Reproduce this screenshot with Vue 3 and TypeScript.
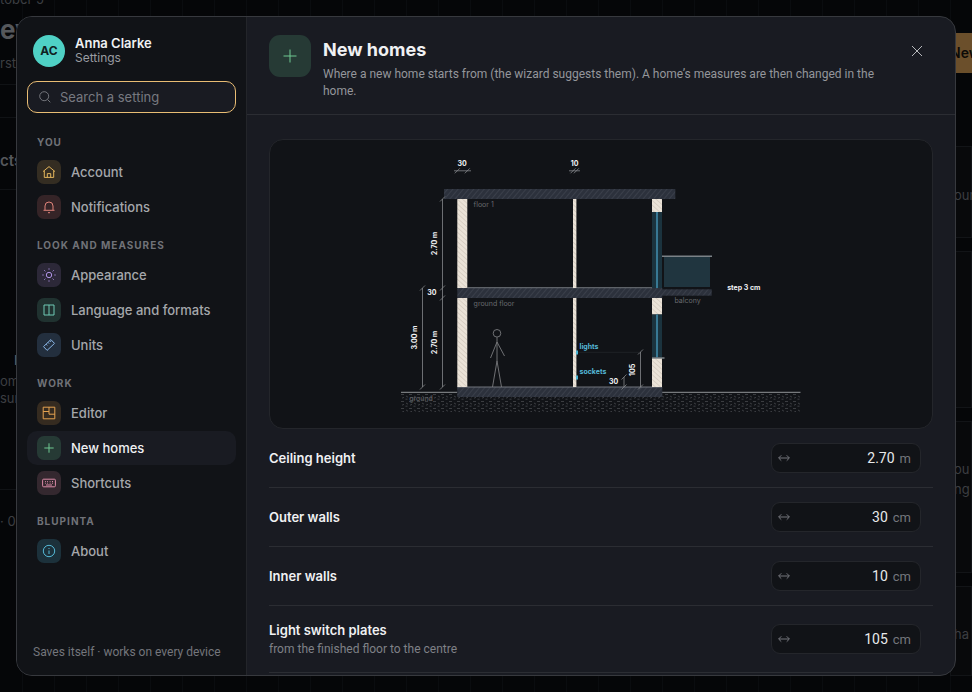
<script setup lang="ts">
import { ref } from 'vue'

interface NavItem {
  label: string
  icon: string
  tone: string
}
interface NavGroup {
  title: string
  items: NavItem[]
}
interface Measure {
  id: string
  label: string
  hint?: string
  value: string
  unit: string
}

const groups: NavGroup[] = [
  {
    title: 'You',
    items: [
      { label: 'Account', icon: 'home', tone: 'gold' },
      { label: 'Notifications', icon: 'bell', tone: 'red' },
    ],
  },
  {
    title: 'Look and measures',
    items: [
      { label: 'Appearance', icon: 'sun', tone: 'violet' },
      { label: 'Language and formats', icon: 'book', tone: 'teal' },
      { label: 'Units', icon: 'ruler', tone: 'blue' },
    ],
  },
  {
    title: 'Work',
    items: [
      { label: 'Editor', icon: 'plan', tone: 'amber' },
      { label: 'New homes', icon: 'plus', tone: 'green' },
      { label: 'Shortcuts', icon: 'keyboard', tone: 'pink' },
    ],
  },
  {
    title: 'Blupinta',
    items: [{ label: 'About', icon: 'info', tone: 'cyan' }],
  },
]

const active = ref('New homes')
const search = ref('')
const measures = ref<Measure[]>([
  { id: 'ceiling', label: 'Ceiling height', value: '2.70', unit: 'm' },
  { id: 'outer', label: 'Outer walls', value: '30', unit: 'cm' },
  { id: 'inner', label: 'Inner walls', value: '10', unit: 'cm' },
  {
    id: 'switch',
    label: 'Light switch plates',
    hint: 'from the finished floor to the centre',
    value: '105',
    unit: 'cm',
  },
])
</script>

<template>
  <div class="page">
    <div class="backdrop" aria-hidden="true">
      <div class="edge left">
        <p class="date">tober 5</p>
        <p class="greeting">ev</p>
        <p class="sub">rst</p>
        <div class="band"></div>
        <p class="tab">cts</p>
        <div class="empty">
          <p class="mark">I</p>
          <p>om</p>
          <p>sur</p>
        </div>
        <p class="count">· 0</p>
      </div>
      <div class="edge right">
        <div class="create">New</div>
        <div class="tile first"><p>our</p></div>
        <div class="tile second"></div>
        <div class="tile third"><p>ou</p><p>ng</p></div>
        <div class="tile fourth"><p>ha</p></div>
      </div>
    </div>

    <section class="dialog" role="dialog" aria-label="Settings">
      <aside class="sidebar">
        <div class="profile">
          <span class="avatar">AC</span>
          <div>
            <p class="name">Anna Clarke</p>
            <p class="role">Settings</p>
          </div>
        </div>
        <label class="search">
          <svg viewBox="0 0 12 12" width="12" height="12">
            <circle cx="5.2" cy="5.2" r="4.5" />
            <path d="M8.5 8.5 11.3 11.3" />
          </svg>
          <input v-model="search" type="text" placeholder="Search a setting" aria-label="Search a setting" />
        </label>
        <nav>
          <div v-for="group in groups" :key="group.title" class="group">
            <h2>{{ group.title }}</h2>
            <button
              v-for="item in group.items"
              :key="item.label"
              type="button"
              class="item"
              :class="{ active: item.label === active }"
              @click="active = item.label"
            >
              <span class="badge" :class="item.tone">
                <svg viewBox="0 0 14 14" width="14" height="14">
                  <path v-if="item.icon === 'home'" d="M1 6.6 7 1.6l6 5M2.3 5.8v6.6h9.4V5.8M5.3 12.4V8.6h3.4v3.8" />
                  <path v-else-if="item.icon === 'bell'" d="M3 10V6a4 4 0 0 1 8 0v4M1.5 10.3h11M6 12.7h2" />
                  <g v-else-if="item.icon === 'sun'">
                    <circle cx="7" cy="7" r="2.7" />
                    <path d="M7 .4v1.2M7 12.4v1.2M.4 7h1.2M12.4 7h1.2M2.3 2.3l1 1M10.7 10.7l1 1M11.7 2.3l-1 1M3.3 10.7l-1 1" />
                  </g>
                  <path v-else-if="item.icon === 'book'" d="M2 2h10v10H2zM7 2v10" />
                  <path v-else-if="item.icon === 'ruler'" d="M1.5 8.6 8.9 1.6l3.6 3.8L5.1 12.4zM4.1 6.2l1.1 1.2M6 4.4l1.1 1.2M7.9 2.7 9 3.9" />
                  <path v-else-if="item.icon === 'plan'" d="M1.2 1.2h11.6v11.6H1.2zM7 1.2v7M1.2 5.5H7M7 8.2h5.8" />
                  <path v-else-if="item.icon === 'plus'" d="M7 2.3v9.4M2.3 7h9.4" />
                  <g v-else-if="item.icon === 'keyboard'">
                    <rect x=".6" y="3.2" width="12.8" height="7.6" rx="1" />
                    <path d="M3 5.5h.8M5.2 5.5H6M7.7 5.5h.8M10 5.5h1M3 7.2h.8M5.2 7.2H6M7.7 7.2h.8M10 7.2h1M4 9h6" />
                  </g>
                  <g v-else>
                    <circle cx="7" cy="7" r="5.7" />
                    <path d="M7 6.5v3.5M7 4v1" />
                  </g>
                </svg>
              </span>
              {{ item.label }}
            </button>
          </div>
        </nav>
        <p class="foot">Saves itself · works on every device</p>
      </aside>

      <main class="panel">
        <header class="head">
          <span class="emblem green">
            <svg viewBox="0 0 14 14" width="14" height="14"><path d="M7 .5v13M.5 7h13" /></svg>
          </span>
          <div class="heading">
            <h1>New homes</h1>
            <p>
              Where a new home starts from (the wizard suggests them). A home’s measures are then
              changed in the home.
            </p>
          </div>
          <button type="button" class="close" aria-label="Close">
            <svg viewBox="0 0 12 12" width="12" height="12"><path d="M1 1 11 11M11 1 1 11" /></svg>
          </button>
        </header>

        <div class="body">
          <figure class="section-card">
            <svg viewBox="270 140 662 288" role="img" aria-label="Section of a two-storey home">
              <defs>
                <pattern id="slab" width="4" height="4" patternUnits="userSpaceOnUse" patternTransform="rotate(40)">
                  <rect width="4" height="4" fill="#2c313c" />
                  <path d="M0 0v4" stroke="#474c57" stroke-width="1" />
                </pattern>
                <pattern id="brick" width="3.5" height="3.5" patternUnits="userSpaceOnUse" patternTransform="rotate(-48)">
                  <rect width="3.5" height="3.5" fill="#ebe3d8" />
                  <path d="M0 0v3.5" stroke="#c9bdb1" stroke-width="1" />
                </pattern>
                <pattern id="soil" x="401" y="393" width="8" height="7" patternUnits="userSpaceOnUse">
                  <path d="M0 1.5h3M5 3l2 1.2M1 5.2l2-.9M4.5 6.2h2" stroke="#3f4246" stroke-width=".9" />
                </pattern>
              </defs>

              <rect x="401" y="393" width="399" height="19" fill="url(#soil)" />
              <path d="M401 392.3H457.3M662 392.3H800.5" class="ground" />

              <rect x="444" y="189" width="231.3" height="10" fill="url(#slab)" />
              <rect x="457.3" y="288" width="205" height="10" fill="url(#slab)" />
              <rect x="662" y="289.3" width="49.7" height="6.4" fill="url(#slab)" />
              <rect x="457.3" y="387" width="205" height="10" fill="url(#slab)" />
              <path d="M467.3 287.7H652M457.3 387H662" class="edge-line" />

              <g fill="url(#brick)">
                <rect x="457.3" y="199" width="10" height="89" />
                <rect x="457.3" y="298" width="10" height="89" />
                <rect x="573" y="199" width="3.4" height="89" />
                <rect x="573" y="298" width="3.4" height="89" />
                <rect x="652" y="199" width="10" height="13" />
                <rect x="652" y="298" width="10" height="16.5" />
                <rect x="652" y="358" width="10" height="29" />
              </g>
              <g fill="#1b333e">
                <rect x="652" y="212" width="10" height="76" />
                <rect x="652" y="314.5" width="10" height="43" />
                <rect x="664" y="257" width="46" height="30" fill="#20353f" />
              </g>
              <path d="M657 212v76M657 314.5v43" stroke="#408aaa" stroke-width="1.6" />
              <path d="M662 256.2h50M652 358h12.5" stroke="#7b8287" stroke-width="1.5" />

              <g class="dim">
                <path d="M442.5 199V387M422.5 288V387M454 170.8h17M569 170.8h11M640.5 352V387M624 377V387" />
                <path d="M440 201.5l5-5M440 290.5l5-5M440 300.5l5-5M440 389.5l5-5M420 290.5l5-5M420 389.5l5-5M454.8 173.3l5-5M464.8 173.3l5-5M570.5 173.3l5-5M573.9 173.3l5-5M638 354.5l5-5M638 389.5l5-5M621.5 379.5l5-5M621.5 389.5l5-5" />
              </g>
              <path d="M577 352.3h63" stroke="#24282d" stroke-width=".7" />
              <path d="M577 350.5v4M577 375.5v4" stroke="#4bb4d4" stroke-width="2" />

              <g class="person">
                <circle cx="497" cy="333.3" r="3.8" />
                <path d="M497 337.2V361M490.5 358 497 342l7.5 14M492.5 387 497 361l4.5 26" />
              </g>

              <g class="value" text-anchor="middle">
                <text x="462" y="166">30</text>
                <text x="574.5" y="166">10</text>
                <text x="431.8" y="295.3">30</text>
                <text x="613.5" y="383.8">30</text>
                <text x="743.8" y="290">step 3 cm</text>
                <text transform="translate(437 243.5) rotate(-90)">2.70 m</text>
                <text transform="translate(437 342.5) rotate(-90)">2.70 m</text>
                <text transform="translate(417 337.5) rotate(-90)">3.00 m</text>
                <text transform="translate(635 370) rotate(-90)">105</text>
              </g>
              <g class="note">
                <text x="473.6" y="207">floor 1</text>
                <text x="473.6" y="306">ground floor</text>
                <text x="409.3" y="401">ground</text>
                <text x="674.5" y="303">balcony</text>
              </g>
              <g class="point">
                <text x="579.5" y="349">lights</text>
                <text x="579.5" y="374">sockets</text>
              </g>
            </svg>
          </figure>

          <div v-for="m in measures" :key="m.id" class="row">
            <div>
              <label :for="m.id">{{ m.label }}</label>
              <p v-if="m.hint">{{ m.hint }}</p>
            </div>
            <div class="field">
              <svg viewBox="0 0 12 8" width="12" height="8">
                <path d="M.8 4h10.4M3.3 1.3.6 4l2.7 2.7M8.7 1.3 11.4 4 8.7 6.7" />
              </svg>
              <input :id="m.id" v-model="m.value" type="text" inputmode="decimal" />
              <span>{{ m.unit }}</span>
            </div>
          </div>
        </div>
      </main>
    </section>
  </div>
</template>

<style>
body {
  margin: 0;
  background: #050608;
}
</style>

<style scoped>
* {
  box-sizing: border-box;
}
p,
h1,
h2,
figure {
  margin: 0;
}
button,
input {
  font: inherit;
  color: inherit;
  border: 0;
  background: none;
  padding: 0;
  outline: 0;
}
svg {
  display: block;
  fill: none;
  stroke: currentColor;
  flex: none;
}
.page {
  position: relative;
  height: 100vh;
  overflow: hidden;
  font-family: Inter, 'Open Sans', sans-serif;
  font-size: 13px;
  color: #f0f1f3;
}

/* Dimmed page behind the dialog */
.backdrop {
  display: flex;
  justify-content: space-between;
  height: 100%;
  color: #3c3e42;
  background: repeating-linear-gradient(90deg, transparent 0 22px, #0a0c0f 22px 23px, transparent 23px 32px);
}
.edge {
  width: 48px;
  display: flex;
  flex-direction: column;
}
.date {
  height: 12px;
  line-height: 12px;
  margin-top: -7px;
}
.greeting {
  font-size: 26px;
  line-height: 40px;
  font-weight: 700;
  color: #55575b;
  margin-top: 5px;
}
.sub {
  line-height: 26px;
}
.band {
  height: 34px;
  margin-top: 8px;
  border-top: 1px solid #101215;
  border-bottom: 1px solid #101215;
}
.tab {
  height: 72px;
  padding-top: 33px;
  font-size: 15px;
  font-weight: 600;
  color: #55575b;
  border-bottom: 1px solid #101215;
}
.empty {
  height: 300px;
  padding-top: 160px;
  line-height: 17px;
  border-bottom: 1px solid #101215;
}
.mark {
  padding-left: 14px;
  height: 23px;
  line-height: 20px;
  color: #66686c;
}
.count {
  padding-top: 23px;
}
.right {
  width: 22px;
  padding-top: 33px;
}
.create {
  height: 40px;
  line-height: 40px;
  background: #6b4f2b;
  color: #0c0a07;
  font-size: 14px;
  font-weight: 600;
  margin-bottom: 73px;
}
.tile {
  border: 1px solid #121417;
  background: #08090b;
  padding-left: 3px;
  font-size: 13px;
  line-height: 20px;
  margin-bottom: 13px;
}
.first {
  height: 92px;
  padding-top: 38px;
}
.second {
  height: 157px;
}
.third {
  height: 152px;
  padding-top: 37px;
}
.fourth {
  height: 90px;
  padding-top: 37px;
}

.dialog {
  position: absolute;
  inset: 16px;
  display: flex;
  overflow: hidden;
  border: 1px solid #37393e;
  border-radius: 16px;
  background: #191b22;
}

.sidebar {
  width: 230px;
  flex: none;
  display: flex;
  flex-direction: column;
  padding: 18px 10px 14px;
  background: #111317;
  border-right: 1px solid #23252a;
}
.profile {
  display: flex;
  align-items: center;
  gap: 10px;
  padding: 0 6px;
  height: 32px;
}
.avatar {
  width: 32px;
  height: 32px;
  border-radius: 50%;
  background: #4fd1c5;
  color: #10211f;
  font-size: 12px;
  font-weight: 700;
  line-height: 32px;
  text-align: center;
}
.name {
  font-weight: 600;
  line-height: 14px;
}
.role {
  font-size: 12px;
  line-height: 16px;
  color: #9a9ca1;
}
.search {
  display: flex;
  align-items: center;
  gap: 9px;
  height: 32px;
  margin: 14px 0 8px;
  padding: 0 11px;
  border: 1px solid #e9bd74;
  border-radius: 10px;
  background: #191b22;
  color: #74767c;
}
.search input {
  flex: 1;
  min-width: 0;
}
.search input::placeholder {
  color: #777980;
  opacity: 1;
}
nav {
  flex: 1;
}
.group {
  display: flex;
  flex-direction: column;
  gap: 1px;
}
.group h2 {
  padding: 15px 10px 6px;
  font-size: 10px;
  line-height: 12px;
  font-weight: 700;
  letter-spacing: 1px;
  text-transform: uppercase;
  color: #707278;
}
.item {
  display: flex;
  align-items: center;
  gap: 10px;
  height: 34px;
  padding: 0 10px;
  border-radius: 10px;
  font-weight: 500;
  color: #a5a7ab;
  text-align: left;
  cursor: pointer;
}
.item.active {
  background: #191b22;
  color: #f0f1f3;
}
.badge {
  display: grid;
  place-items: center;
  width: 24px;
  height: 24px;
  border-radius: 7px;
}
.gold { color: #e2b45c; background: #342d22; }
.red { color: #e0837a; background: #352427; }
.violet { color: #b094e6; background: #2c2838; }
.teal { color: #6fc9b4; background: #203230; }
.blue { color: #8ab6e6; background: #232f3e; }
.amber { color: #e5a350; background: #352b20; }
.green { color: #6fc892; background: #263a35; }
.pink { color: #dc8ca8; background: #34282f; }
.cyan { color: #56b9d6; background: #1c313b; }
.foot {
  padding: 0 6px;
  font-family: Roboto, sans-serif;
  font-size: 12px;
  line-height: 17px;
  color: #74767c;
}

.panel {
  flex: 1;
  min-width: 0;
  display: flex;
  flex-direction: column;
}
.head {
  display: flex;
  align-items: flex-start;
  gap: 12px;
  padding: 18px 22px 14px;
  border-bottom: 1px solid #2b2d33;
}
.emblem {
  display: grid;
  place-items: center;
  flex: none;
  width: 42px;
  height: 42px;
  border-radius: 11px;
}
.heading {
  flex: 1;
}
.heading h1 {
  font-size: 18px;
  line-height: 30px;
  font-weight: 700;
}
.heading p {
  margin-top: 1px;
  font-family: Roboto, sans-serif;
  font-size: 12px;
  line-height: 17px;
  color: #94969b;
}
.close {
  display: grid;
  place-items: center;
  width: 32px;
  height: 32px;
  color: #b6b8bc;
  cursor: pointer;
}
.body {
  flex: 1;
  min-height: 0;
  overflow: hidden;
  padding: 24px 22px 0;
}
.section-card {
  border: 1px solid #24262b;
  border-radius: 14px;
  background: #111317;
  overflow: hidden;
}
.section-card svg {
  width: 100%;
  height: auto;
}
.section-card rect {
  stroke: none;
}
.section-card text {
  font-size: 7px;
  stroke: none;
}
.ground { stroke: #777a7d; stroke-width: 1.2; }
.edge-line { stroke: #71757c; stroke-width: 1; }
.dim { stroke: #85888b; stroke-width: 0.8; }
.person { stroke: #797b7e; stroke-width: 0.9; }
.value { fill: #f0f1f3; font-weight: 700; }
.note { fill: #686a6e; }
.point { fill: #55b9d8; font-weight: 700; }

.row {
  display: flex;
  align-items: center;
  justify-content: space-between;
  padding: 14px 12px 14px 0;
  border-bottom: 1px solid #2b2d33;
}
.row label {
  display: block;
  line-height: 20px;
  font-weight: 600;
}
.row p {
  margin-top: 1px;
  font-family: Roboto, sans-serif;
  font-size: 12px;
  line-height: 17px;
  color: #7f8187;
}
.field {
  display: flex;
  align-items: center;
  width: 150px;
  height: 30px;
  padding: 0 9px 0 6px;
  border: 1px solid #24262b;
  border-radius: 9px;
  background: #111317;
  font-family: Roboto, sans-serif;
  color: #74767c;
}
.field input {
  flex: 1;
  min-width: 0;
  margin-right: 5px;
  text-align: right;
  font-size: 14px;
  color: #e8e9eb;
}
</style>
